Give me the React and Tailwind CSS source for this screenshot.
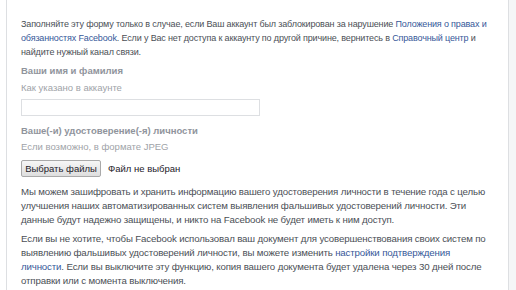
import React from "react";

const Link = ({ children }) => (
  <a href="#" className="text-[#365899] no-underline">
    {children}
  </a>
);

export default function App() {
  return (
    <div className="flex h-[290px] w-[516px] overflow-hidden bg-white font-['Liberation_Sans',Arial,sans-serif] text-[9px] leading-[14px] tracking-[-0.15px] text-[#4b4f56]">
      <div className="w-[6px] shrink-0 bg-white" />
      <div className="w-[503px] shrink-0 border-x border-[#dddfe2] bg-white pl-[14px] pr-[13px] pt-[17px]">
        <p>
          Заполняйте эту форму только в случае, если Ваш аккаунт был заблокирован за нарушение{" "}
          <Link>Положения о правах и обязанностях Facebook</Link>. Если у Вас нет доступа к аккаунту по
          другой причине, вернитесь в <Link>Справочный центр</Link> и найдите нужный канал связи.
        </p>

        <div className="mt-[5px] text-[9.5px] font-bold tracking-normal text-[#90949c]">Ваши имя и фамилия</div>
        <div className="mt-[3px] text-[9.5px] tracking-normal text-[#a0a3a8]">Как указано в аккаунте</div>
        <input
          type="text"
          className="mt-[4px] block h-[17px] w-[239px] border border-[#dddfe2] bg-white outline-none"
        />

        <div className="mt-[8px] text-[9.5px] font-bold tracking-normal text-[#90949c]">
          Ваше(-и) удостоверение(-я) личности
        </div>
        <div className="mt-[2px] text-[9.5px] tracking-normal text-[#a0a3a8]">Если возможно, в формате JPEG</div>
        <div className="mt-[6px] flex items-center gap-[7px]">
          <button className="h-[17px] w-[80px] rounded-[2px] border border-[#a9a9a9] bg-gradient-to-b from-[#f6f6f6] to-[#dedede] text-[9.5px] leading-[15px] tracking-normal text-[#1d2129]">
            Выбрать файлы
          </button>
          <span className="text-[9.5px] tracking-normal text-[#1d2129]">Файл не выбран</span>
        </div>

        <div className="text-[9.7px]">
          <p className="mt-[8px]">
            Мы можем зашифровать и хранить информацию вашего удостоверения личности в течение года с целью
            улучшения наших автоматизированных систем выявления фальшивых удостоверений личности. Эти данные
            будут надежно защищены, и никто на Facebook не будет иметь к ним доступ.
          </p>
          <p className="mt-[5px]">
            Если вы не хотите, чтобы Facebook использовал ваш документ для усовершенствования своих систем по
            выявлению фальшивых удостоверений личности, вы можете изменить{" "}
            <Link>настройки подтверждения личности</Link>. Если вы выключите эту функцию, копия вашего
            документа будет удалена через 30 дней после отправки или с момента выключения.
          </p>
        </div>
      </div>
      <div className="flex-1 bg-[#f5f6f7]" />
    </div>
  );
}
